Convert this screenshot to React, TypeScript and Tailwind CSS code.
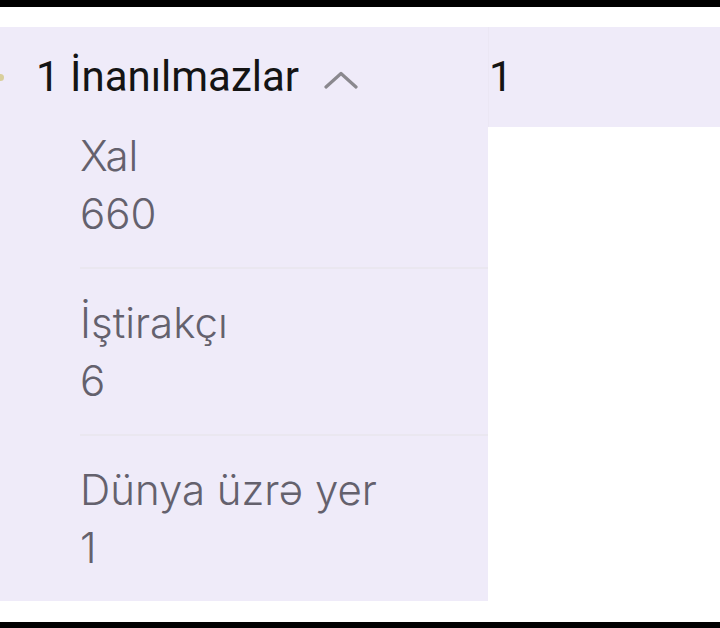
import React from 'react';

const stats = [
  { label: 'Xal', value: '660' },
  { label: 'İştirakçı', value: '6' },
  { label: 'Dünya üzrə yer', value: '1' },
];

function ChevronUp() {
  return (
    <svg width="34" height="18" viewBox="0 0 34 18" fill="none" className="shrink-0">
      <path d="M2 16 L17 2.5 L32 16" stroke="#8a888e" strokeWidth="3.2" strokeLinecap="round" strokeLinejoin="round" />
    </svg>
  );
}

export default function App() {
  return (
    <div className="flex h-[628px] w-[720px] flex-col overflow-hidden bg-white" style={{ fontFamily: 'Inter, "Noto Sans", sans-serif' }}>
      <div className="h-[7px] shrink-0 bg-black" />

      <div className="mt-[20px] flex">
        {/* team column */}
        <div className="w-[488px] shrink-0 bg-[#efebf9]">
          <div className="flex h-[100px] items-center" style={{ fontFamily: 'Roboto, "Liberation Sans", sans-serif' }}>
            <span className="-ml-[3px] mr-[32px] h-[7px] w-[7px] shrink-0 rounded-full bg-[#d9cf9c]" />
            <span className="text-[42px] leading-none text-[#141414]">1 İnanılmazlar</span>
            <span className="ml-[25px] mt-[6px]">
              <ChevronUp />
            </span>
          </div>

          <div className="pb-[24px] pl-[80px]">
            {stats.map((s, i) => (
              <div key={s.label} className={i === 0 ? 'pt-0' : 'border-t-2 border-[#eae7f0] pt-[25px]'}>
                <div className={i < stats.length - 1 ? 'pb-[24px]' : ''}>
                  <div className="text-[42px] font-[350] leading-[58px] text-[#64616d]">{s.label}</div>
                  <div className="text-[42px] font-[350] leading-[58px] text-[#64616d]">{s.value}</div>
                </div>
              </div>
            ))}
          </div>
        </div>

        {/* score column */}
        <div className="flex-1 self-start">
          <div className="flex h-[100px] items-center border-l border-[#ebe7f4] bg-[#efebf9]" style={{ fontFamily: 'Roboto, "Liberation Sans", sans-serif' }}>
            <span className="text-[42px] leading-none text-[#141414]">1</span>
          </div>
        </div>
      </div>

      <div className="flex-1" />
      <div className="h-[6px] shrink-0 bg-black" />
    </div>
  );
}
